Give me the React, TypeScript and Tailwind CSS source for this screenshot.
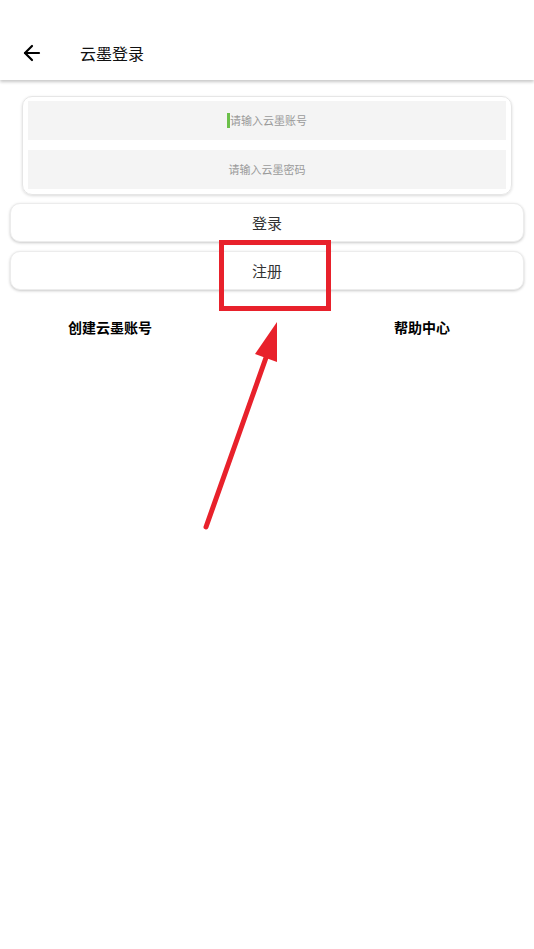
import { ArrowLeft } from 'lucide-react'

const font = { fontFamily: '"Noto Sans CJK SC", "Noto Sans", sans-serif' }

function InputRow({ placeholder, cursor }: { placeholder: string; cursor?: boolean }) {
  return (
    <div className="h-[39px] bg-[#f4f4f4] flex items-center justify-center">
      {cursor && <span className="w-[3px] h-[15px] bg-[#6cc04a]" />}
      <span className="text-[11px] text-[#9a9a9a] leading-none">{placeholder}</span>
    </div>
  )
}

function Button({ label }: { label: string }) {
  return (
    <div className="h-[39px] rounded-[10px] bg-white border border-[#ececec] shadow-[0_1px_3px_rgba(0,0,0,0.22)] flex items-center justify-center">
      <span className="text-[15px] text-[#333] leading-none">{label}</span>
    </div>
  )
}

export default function App() {
  return (
    <div className="relative w-[534px] h-[949px] bg-white overflow-hidden" style={font}>
      <div className="h-[80px] pt-[26px] flex items-center bg-white shadow-[0_2px_3px_rgba(0,0,0,0.22)] relative z-10">
        <ArrowLeft className="ml-[20px] text-black" size={24} strokeWidth={2.2} />
        <span className="ml-[36px] text-[16px] text-[#111]">云墨登录</span>
      </div>

      <div className="mx-[22px] mt-[16px] rounded-[10px] border border-[#e6e6e6] shadow-[0_1px_3px_rgba(0,0,0,0.15)] px-[5px] pt-[4px] pb-[5px] flex flex-col gap-[10px]">
        <InputRow placeholder="请输入云墨账号" cursor />
        <InputRow placeholder="请输入云墨密码" />
      </div>

      <div className="mx-[10px] mt-[8px] flex flex-col gap-[9px]">
        <Button label="登录" />
        <Button label="注册" />
      </div>

      <div className="mt-[27px] pl-[68px] pr-[84px] flex justify-between">
        <span className="text-[14px] font-bold text-black">创建云墨账号</span>
        <span className="text-[14px] font-bold text-black">帮助中心</span>
      </div>

      {/* annotation overlay */}
      <div className="absolute left-[219px] top-[240px] w-[112px] h-[71px] border-[5px] border-[#e8212b]" />
      <svg className="absolute left-0 top-0" width="534" height="949" viewBox="0 0 534 949">
        <line x1="206" y1="527" x2="268" y2="352" stroke="#e8212b" strokeWidth="5" strokeLinecap="round" />
        <polygon points="277,322 255,354 277,362" fill="#e8212b" />
      </svg>
    </div>
  )
}
